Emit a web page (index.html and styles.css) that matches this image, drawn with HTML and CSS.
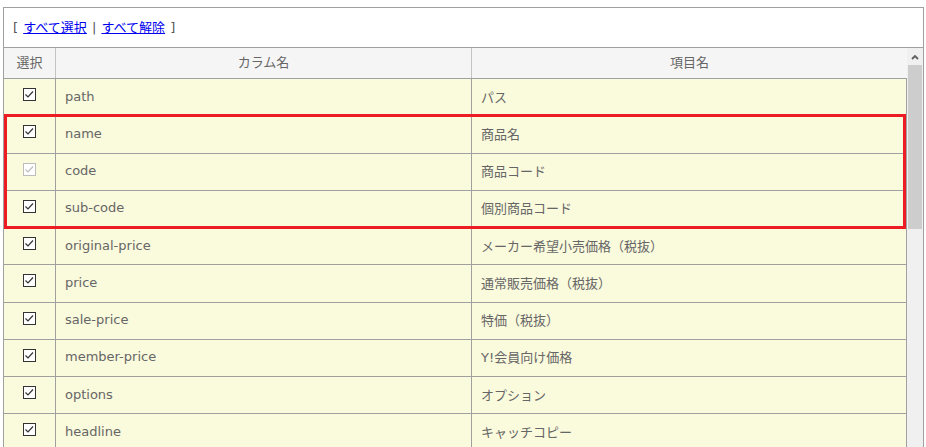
FILE: index.html
```html
<!DOCTYPE html>
<html lang="ja">
<head>
    <meta charset="UTF-8">
    <meta name="viewport" content="width=device-width, initial-scale=1.0">
    <title>カラム選択</title>
    <link rel="stylesheet" href="styles.css">
</head>
<body>
    <div class="panel">
        <p class="toggle">[ <a href="#">すべて選択</a> | <a href="#">すべて解除</a> ]</p>

        <div class="grid-wrap">
            <div class="grid">
                <div class="row head">
                    <div class="c sel">選択</div>
                    <div class="c col">カラム名</div>
                    <div class="c item">項目名</div>
                </div>

                <div class="rows">
                    <div class="row">
                        <div class="c sel"><span class="cb"><svg width="13" height="13" viewBox="0 0 13 13"><rect x="0.5" y="0.5" width="12" height="12"/><polyline points="2.5,6.5 5,9 10,3.5"/></svg></span></div>
                        <div class="c col">path</div>
                        <div class="c item">パス</div>
                    </div>
                    <div class="row">
                        <div class="c sel"><span class="cb"><svg width="13" height="13" viewBox="0 0 13 13"><rect x="0.5" y="0.5" width="12" height="12"/><polyline points="2.5,6.5 5,9 10,3.5"/></svg></span></div>
                        <div class="c col">name</div>
                        <div class="c item">商品名</div>
                    </div>
                    <div class="row">
                        <div class="c sel"><span class="cb off"><svg width="13" height="13" viewBox="0 0 13 13"><rect x="0.5" y="0.5" width="12" height="12"/><polyline points="2.5,6.5 5,9 10,3.5"/></svg></span></div>
                        <div class="c col">code</div>
                        <div class="c item">商品コード</div>
                    </div>
                    <div class="row">
                        <div class="c sel"><span class="cb"><svg width="13" height="13" viewBox="0 0 13 13"><rect x="0.5" y="0.5" width="12" height="12"/><polyline points="2.5,6.5 5,9 10,3.5"/></svg></span></div>
                        <div class="c col">sub-code</div>
                        <div class="c item">個別商品コード</div>
                    </div>
                    <div class="row">
                        <div class="c sel"><span class="cb"><svg width="13" height="13" viewBox="0 0 13 13"><rect x="0.5" y="0.5" width="12" height="12"/><polyline points="2.5,6.5 5,9 10,3.5"/></svg></span></div>
                        <div class="c col">original-price</div>
                        <div class="c item">メーカー希望小売価格（税抜）</div>
                    </div>
                    <div class="row">
                        <div class="c sel"><span class="cb"><svg width="13" height="13" viewBox="0 0 13 13"><rect x="0.5" y="0.5" width="12" height="12"/><polyline points="2.5,6.5 5,9 10,3.5"/></svg></span></div>
                        <div class="c col">price</div>
                        <div class="c item">通常販売価格（税抜）</div>
                    </div>
                    <div class="row">
                        <div class="c sel"><span class="cb"><svg width="13" height="13" viewBox="0 0 13 13"><rect x="0.5" y="0.5" width="12" height="12"/><polyline points="2.5,6.5 5,9 10,3.5"/></svg></span></div>
                        <div class="c col">sale-price</div>
                        <div class="c item">特価（税抜）</div>
                    </div>
                    <div class="row">
                        <div class="c sel"><span class="cb"><svg width="13" height="13" viewBox="0 0 13 13"><rect x="0.5" y="0.5" width="12" height="12"/><polyline points="2.5,6.5 5,9 10,3.5"/></svg></span></div>
                        <div class="c col">member-price</div>
                        <div class="c item">Y!会員向け価格</div>
                    </div>
                    <div class="row">
                        <div class="c sel"><span class="cb"><svg width="13" height="13" viewBox="0 0 13 13"><rect x="0.5" y="0.5" width="12" height="12"/><polyline points="2.5,6.5 5,9 10,3.5"/></svg></span></div>
                        <div class="c col">options</div>
                        <div class="c item">オプション</div>
                    </div>
                    <div class="row">
                        <div class="c sel"><span class="cb"><svg width="13" height="13" viewBox="0 0 13 13"><rect x="0.5" y="0.5" width="12" height="12"/><polyline points="2.5,6.5 5,9 10,3.5"/></svg></span></div>
                        <div class="c col">headline</div>
                        <div class="c item">キャッチコピー</div>
                    </div>

                    <!-- required columns -->
                    <div class="highlight"></div>
                </div>
            </div>

            <div class="scrollbar">
                <div class="sb-up"><svg width="8" height="6" viewBox="0 0 8 6"><polyline points="1,5 4,2 7,5"/></svg></div>
                <div class="sb-thumb"></div>
            </div>
        </div>
    </div>
</body>
</html>
```

FILE: styles.css
```css
html, body {
    overflow: hidden;
}
body {
    margin: 0;
    background: #fff;
    color: #666;
    font-family: "DejaVu Sans", "Noto Sans CJK JP", sans-serif;
    font-size: 13px;
}
.panel {
    margin: 7px 2px 0 3px;
    border: 1px solid #a0a0a0;
    border-bottom: none;
    background: #fff;
}
.toggle {
    margin: 0;
    padding: 11px 9px 10px;
    line-height: 18px;
    color: #555;
    word-spacing: 1px;
}
.toggle a {
    color: #0000ee;
    word-spacing: 0;
}
.grid-wrap {
    display: flex;
    height: 420px;
    border-top: 1px solid #a0a0a0;
    overflow: hidden;
}
.grid {
    flex: 1;
}
.rows {
    position: relative;
}
.row {
    display: flex;
    height: 37.25px;
    box-sizing: border-box;
    border-bottom: 1px solid #a0a0a0;
    background: #fafadc;
}
.row.head {
    height: 31px;
    background: #f5f5f5;
}
.c {
    display: flex;
    align-items: center;
    box-sizing: border-box;
    padding-bottom: 2px;
    white-space: nowrap;
}
.sel {
    width: 52px;
    justify-content: center;
    border-right: 1px solid #a0a0a0;
}
.col {
    width: 416px;
    padding-left: 9px;
    border-right: 1px solid #a0a0a0;
}
.item {
    flex: 1;
    padding-left: 9px;
    border-right: 1px solid #a0a0a0;
}
.head .c {
    justify-content: center;
    padding-left: 0;
    padding-bottom: 3px;
    border-right-color: #c4c4c4;
}
.head .item {
    border-right: none;
}

/* checkbox */
.cb {
    display: block;
    width: 13px;
    height: 13px;
    margin-bottom: 3px;
}
.cb svg {
    display: block;
}
.cb rect {
    fill: #fff;
    stroke: #333;
}
.cb polyline {
    fill: none;
    stroke: #333;
    stroke-width: 1.2;
}
.cb.off rect,
.cb.off polyline {
    stroke: #bdbdbd;
}

.highlight {
    position: absolute;
    top: 35px;
    left: 0;
    width: 902px;
    height: 115px;
    box-sizing: border-box;
    border: 3px solid #ed1c24;
    pointer-events: none;
}

/* scrollbar */
.scrollbar {
    width: 16px;
    display: flex;
    flex-direction: column;
    background: #f0f0f0;
}
.sb-up {
    height: 17px;
    display: flex;
    align-items: center;
    justify-content: center;
}
.sb-up polyline {
    fill: none;
    stroke: #606060;
    stroke-width: 1.8;
}
.sb-thumb {
    height: 164px;
    margin: 0 1px;
    background: #cdcdcd;
}
```
